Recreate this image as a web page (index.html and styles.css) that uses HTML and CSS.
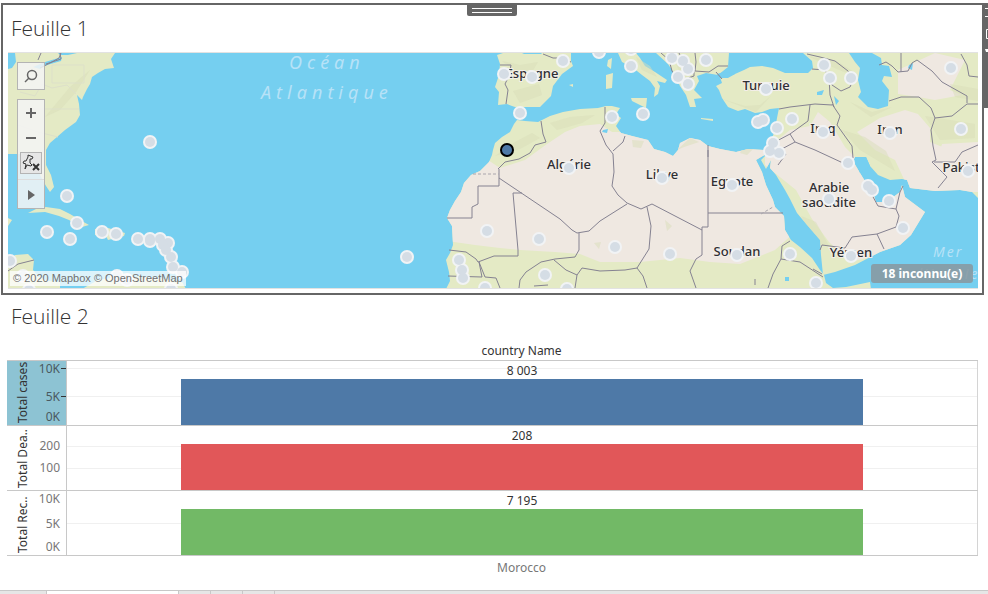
FILE: index.html
```html
<!DOCTYPE html>
<html lang="fr">
<head>
<meta charset="utf-8">
<title>Feuille 1 – Feuille 2</title>
<link rel="stylesheet" href="styles.css">
</head>
<body>
<main class="dashboard">
  <section class="sheet sheet-selected">
    <div class="grip"><i></i><i></i></div>
    <div class="side-tools">
      <svg width="4" height="105" viewBox="0 0 4 105" fill="none" stroke="#fff"><path d="M1 5.500H4M1 13.500H4M4 26.500H2.500V35.500H4"/><path d="M1 46H4V49H2Z" fill="#fff" stroke="none"/></svg>
    </div>
    <h2 class="title">Feuille 1</h2>
    <div class="map">
      <svg class="map-canvas" viewBox="8 53 970 235" preserveAspectRatio="xMidYMid slice">
        <defs>
          <clipPath id="africa-clip"><path d="M517 120L514 124 510 132 502 137 495 143 493 150 492 155 489 162 480 171 471 175 464 183 461 192 455 201 450 210 447 218 452 226 453 245 450 253 446 260 449 272 450 281 460 289H871L870 282 846 287 833 288 826 283 824 275 820 270 812 258 800 247 791 240 785 230 784 216 775 207 773 200 766 185 762 172 756 160 768 153 765 150 748 149 736 152 720 149 708 146 700 140 690 138 680 143 678 150 673 156 665 152 654 149 648 140 632 136 621 133 616 126 621 118 616 114 620 108 612 106 606 106 598 108 580 109 563 112 550 116 538 122 525 121Z"/></clipPath>
          <clipPath id="asia-clip"><path d="M768 153L771 141 775 130 777 118 779 108 770 109 762 112 755 113 745 109 738 111 728 107 722 98 719 90 716 86 722 83 720 77 728 77 735 74 744 70 750 67 762 66 773 68 785 73 808 73 813 68 812 61 803 53H978V198L972 192 960 190 935 191 910 188 907 180 902 179 890 180 878 175 870 166 866 157 855 157 853 161 860 173 868 186 874 196 876 202 884 202 892 198 900 192 902 185 905 197 917 206 925 212 911 235 900 245 880 252 855 265 835 272 823 275 821 255 820 240 807 225 797 213 790 199 785 190 776 175 770 168 771 160 766 169 761 160Z"/></clipPath>
        </defs>
        <path class="sea" d="M8 53H978V289H8Z"/>

        <g class="land">
          <path d="M8 53H115L111 59 114 68 105 69 98 73 92 77 90 84 87 89 83 97 82 100 77 95 79 104 80 115 76 122 65 130 57 137 50 143 46 150 46 165 51 175 54 187 50 192 46 186 40 175 36 158 26 154H8Z"/>
          <path d="M28 213L36 209 46 207 60 209 70 214 80 220 89 225 82 227 69 220 59 216 45 212ZM95 229L108 228 125 233 124 236 108 240 106 236 95 235Z"/>
          <path d="M8 264L15 255 28 254 34 260 33 270 38 276 48 281 60 282V289H8ZM8 218L12 220 8 226ZM82 289L98 280 125 276 160 278 182 282 186 289Z"/>
          <path d="M446 289L450 281 449 272 446 260 450 253 453 245 452 226 447 218 450 210 455 201 461 192 464 183 471 175 480 171 489 162 492 155 493 150 495 143 502 137 510 132 514 124 517 120 525 121 538 122 550 116 563 112 580 109 598 108 606 106 612 106 620 108 616 114 621 118 616 126 621 133 632 136 648 140 654 149 665 152 673 156 678 150 680 143 690 138 700 140 708 146 720 149 736 152 748 149 765 150 768 153 756 160 762 172 766 185 773 200 775 207 784 216 785 230 791 240 800 247 812 258 820 270 824 275 826 283 833 288 846 287 870 282 871 289Z"/>
          <path d="M768 153L771 141 775 130 777 118 779 108 770 109 762 112 755 113 745 109 738 111 728 107 722 98 719 90 716 86 722 83 720 77 728 77 735 74 744 70 750 67 762 66 773 68 785 73 808 73 813 68 812 61 803 53H978V198L972 192 960 190 935 191 910 188 907 180 902 179 890 180 878 175 870 166 866 157 855 157 853 161 860 173 868 186 874 196 876 202 884 202 892 198 900 192 902 185 905 197 917 206 925 212 911 235 900 245 880 252 855 265 835 272 823 275 821 255 820 240 807 225 797 213 790 199 785 190 776 175 770 168 771 160 766 169 761 160Z"/>
          <path d="M497 55L503 53H571L571 61 573 66 562 74 553 86 551 96 543 104 540 107 522 107 518 108 512 106 507 104 498 105 499 92 495 87 499 75 500 64Z"/>
          <path d="M618 53L622 62 632 67 642 75 650 81 655 88 654 97 658 94 660 86 657 81 665 83 667 80 655 72 645 66 640 58 636 53ZM631 98L647 98 646 108 632 101ZM656 53L668 64 674 73 680 86 686 95 690 107 696 107 694 99 702 98 694 90 699 81 697 76 706 73 718 75 728 67 729 53Z"/>
          <path d="M608 60L612 58 611 69 607 66ZM606 75L613 73 612 88 606 89ZM701 118L713 119 713 121 701 119ZM569 85L573 84 573 87Z"/>
        </g>

        <g clip-path="url(#africa-clip)">
          <path class="desert" d="M440 240L475 245 500 248 520 250 555 252 580 254 600 262 640 262 680 258 710 262 740 264 775 250 795 232 770 150 710 130 650 132 612 132 600 124 580 126 565 132 547 144 525 160 500 168 485 158 440 200Z"/>
          <path class="hill" d="M495 156L520 149 540 138 532 133 515 142ZM550 123L570 117 595 115 582 123 557 130ZM632 140L644 141 641 148 633 147ZM742 149L753 149 747 155 740 153ZM677 150L690 138 699 142 684 147ZM665 220L672 226 667 231ZM594 243L601 242 599 249Z"/>
        </g>
        <g clip-path="url(#asia-clip)">
          <path class="desert" d="M765 150L790 130 810 126 818 112 830 122 845 147 855 157 868 186 905 180 930 215 900 250 850 262 829 242 812 219 796 190 765 165ZM880 118L905 110 918 114 930 128 930 142 955 152 978 145V192H910L895 160 875 150 857 132ZM898 94L898 70 935 53 965 60 950 90 962 95 935 100 918 97ZM942 144L978 142V190L930 187Z"/>
          <path class="hill" d="M842 130L860 150 895 171 886 151 865 137ZM850 102L872 112 892 107 871 117ZM807 56L838 62 857 74 844 72ZM722 99L745 106 760 105 771 96 756 112ZM801 216L816 222 829 246 818 245ZM925 116L975 124 975 138 940 140ZM950 84L978 89 978 101 955 97ZM852 160L868 168 876 177 867 172Z"/>
        </g>
        <path class="hill" d="M502 61L520 65 538 62 532 72 514 70ZM513 91L539 84 542 95 520 103ZM636 57L650 66 657 77 642 70ZM672 55L685 65 695 78 684 82ZM45 117L70 87 90 70 76 92 60 110Z"/>

        <path class="sea" d="M849 53L855 62 860 68 858 80 861 92 858 97 868 107 878 109 888 106 889 90 882 81 884 76 892 77 889 66 882 65 881 58 872 53ZM8 53H15L16 62 12 68 8 69ZM33 67L45 62 62 57 61 61 47 65 40 69ZM58 53H77L68 55 60 55ZM522 53H542L541 54H524ZM717 74L724 72 735 74 728 78 720 78ZM785 277h4v4h-4ZM817 92L824 90 822 95 817 95ZM834 96L839 101 836 105ZM909 65L913 63 912 70 908 68ZM603 130L608 129 607 133 602 132ZM855 157L866 157 870 166 860 173Z"/>

        <g class="state-lines">
          <path d="M52 65H84V83H52ZM28 109H79M20 92L35 96 42 84 52 88 67 85 76 94M18 125L38 132 58 137"/>
        </g>
        <g class="borders">
          <path d="M61 53L59 58 50 63 40 68M8 271L18 264 34 260M41 53L38 60M60 53L61 59 46 64"/>
          <path d="M500 65L511 65 509 76 505 84 508 90 506 104M543 54L553 58 560 58 571 62M541 121L543 134 546 142 535 145 530 153 519 159 505 162 498 169M605 107L605 123 600 131 606 145 613 154 614 172 612 186 618 195 627 203 641 209 652 204 702 230"/>
          <path d="M499 169V186H478V204L472 207V218H447M499 178L560 219 572 230 577 233 589 231 600 221 627 204M522 193H513L518 250V256H494L478 262 476 259 466 252 449 250M579 233V250L575 257 555 259 541 262 526 272 520 280 519 288M554 260L566 270 577 275 582 268 600 271 625 270 637 268 649 249 651 226 647 207M637 268L643 276 647 288M448 276L482 277 479 262 485 277 496 278 500 288M577 275L575 288M534 286L548 285M708 150V227H702V255L696 259 690 271 696 288M708 213H783M790 241L782 246 781 259 773 274 768 288M781 259L800 262 823 277M755 279V285M813 269L822 274"/>
          <path d="M708 145V157M625 136L623 142 613 151"/>
          <path d="M779 109L790 107 815 104 832 105M810 105L808 121 790 134 773 143M790 134L795 142 815 150 843 163M795 142L778 151 786 154 778 165M832 104L840 116 837 125 852 146 853 158M843 163L854 165M872 195L878 206 896 209 900 192 903 186M896 209L899 216 896 227 877 234 884 249M877 234L852 237 845 248 822 245 820 250M807 54L820 57 835 61 848 71 854 78 850 87 841 91 832 85 829 78M812 69L825 70 829 78 830 95 834 107M889 101L901 97 919 97 931 108 935 118 952 116 967 104 978 104M879 65L886 62 892 66 898 72 908 71 912 63 917 60 932 71 942 82 967 96V103M961 54L967 65 969 76 978 77M901 53V72M935 118L931 130 933 146 936 160 932 162M934 162L955 162 962 152 978 145M932 162L947 177 938 188"/>
          <path d="M661 53L669 60 672 71 680 82M679 53L683 61 694 68 694 76 682 80M695 53L696 62 695 71 709 72 718 66 728 66M716 72L722 79"/>
        </g>
        <path class="borders dashed" d="M473 174H499M761 214L773 207"/>

        <g class="sea-names">
          <text class="ocean" x="289" y="69">Océan</text>
          <text class="ocean" x="261" y="99">Atlantique</text>
          <text class="mer" x="933" y="257">Mer</text>
          <text class="mer" x="914" y="279">d’Arabie</text>
        </g>
        <g class="country-names">
          <text x="532" y="78">Espagne</text><text x="569" y="169">Algérie</text>
          <text x="662" y="179">Libye</text><text x="732" y="186">Egypte</text>
          <text x="737" y="256">Soudan</text><text x="766" y="90">Turquie</text>
          <text x="823" y="133">Iraq</text><text x="890" y="134">Iran</text>
          <text x="829" y="192">Arabie</text><text x="829" y="207">saoudite</text>
          <text x="851" y="257">Yémen</text><text x="969" y="172">Pakistan</text>
        </g>
        <g class="marks" id="marks"></g>
        <circle class="mark-selected" cx="507" cy="150" r="6"/>
      </svg>
      <div class="map-tools">
        <button class="tool search" aria-label="Rechercher"><svg width="16" height="16" viewBox="0 0 16 16"><circle class="lens" cx="9" cy="7" r="4.500"/><path class="lens" d="M6 10L2 14"/></svg></button>
        <div class="tool-group">
          <button class="tool" aria-label="Zoom avant"><svg width="16" height="16" viewBox="0 0 16 16"><path class="thick" d="M3 8H13M8 3V13"/></svg></button>
          <button class="tool" aria-label="Zoom arrière"><svg width="16" height="16" viewBox="0 0 16 16"><path class="thick" d="M3 8H13"/></svg></button>
          <button class="tool pin" aria-label="Réinitialiser"><svg width="20" height="20" viewBox="0 0 20 20"><path class="dark" d="M7 2L12 4 11 6 9 6 9 10 11 12 10 13 6 12 4 16 5 11 2 10 3 8 5 8 7 4Z"/><path class="thick dark" d="M12 11L18 17M18 11L12 17"/></svg></button>
          <button class="tool more" aria-label="Autres outils"><svg width="16" height="16" viewBox="0 0 16 16"><path class="solid" d="M5 3L12 8 5 13Z"/></svg></button>
        </div>
      </div>
      <div class="attribution">© 2020 Mapbox © OpenStreetMap</div>
      <button class="unknown">18 inconnu(e)</button>
    </div>
  </section>

  <section class="sheet-two">
    <h2 class="title">Feuille 2</h2>
    <div class="chart">
      <div class="column-title">country Name</div>
      <div class="row">
        <div class="axis active"><span class="axis-name">Total cases</span>
          <div class="ticks"><span class="t8 dash">10K</span><span class="t36 dash">5K</span><span class="t56">0K</span></div></div>
        <div class="plot cases"><span class="value">8 003</span><div class="bar blue"></div></div>
      </div>
      <div class="row">
        <div class="axis"><span class="axis-name">Total Dea..</span>
          <div class="ticks"><span class="t20">200</span><span class="t42">100</span></div></div>
        <div class="plot deaths"><span class="value">208</span><div class="bar red"></div></div>
      </div>
      <div class="row">
        <div class="axis"><span class="axis-name">Total Rec..</span>
          <div class="ticks"><span class="t8">10K</span><span class="t33">5K</span><span class="t56">0K</span></div></div>
        <div class="plot recovered"><span class="value">7 195</span><div class="bar green"></div></div>
      </div>
      <div class="column-label">Morocco</div>
    </div>
  </section>
</main>
<footer class="tabs"><span class="tab w46"></span><span class="tab current"></span><span class="tab w32"></span><span class="tab w32"></span><span class="tab w32"></span></footer>
<script src="map.js"></script>
</body>
</html>
```
FILE: map.js
```js
// Country marks, as map coordinates.
const points = [
  [150,142],[67,196],[77,223],[47,232],[70,239],[102,232],[116,234],[138,239],
  [150,239],[150,241],[160,239],[168,243],[163,245],[166,250],[171,257],[182,272],[173,267],
  [171,289],[10,261],[23,276],[29,290],[117,276],[127,280],[407,257],
  [504,74],[532,77],[563,61],[599,52],[520,113],[612,117],[643,114],[569,168],
  [487,231],[539,239],[615,247],[670,254],[459,260],[462,270],[463,278],[485,288],
  [545,275],[567,289],[631,66],[631,49],[672,58],[683,61],[688,69],[678,77],[688,84],
  [706,60],[766,89],[758,122],[763,120],[777,128],[792,119],[773,143],[770,151],[779,153],
  [662,178],[732,185],[737,255],[790,254],[824,65],[830,78],[851,78],[951,68],[961,129],
  [823,132],[890,133],[848,163],[968,171],[829,199],[868,186],[872,190],[889,201],
  [903,228],[851,256],[816,283]
];
const layer = document.getElementById("marks");
// Halos first, so that overlapping marks merge into one shape.
for (const [radius, name] of [[7, "halo"], [5, "dot"]]) {
  for (const [x, y] of points) {
    const c = document.createElementNS("http://www.w3.org/2000/svg", "circle");
    c.setAttribute("cx", x);
    c.setAttribute("cy", y);
    c.setAttribute("r", radius);
    c.setAttribute("class", name);
    layer.appendChild(c);
  }
}
```
FILE: styles.css
```css
* { box-sizing: border-box; }
body {
  margin: 0;
  min-height: 100vh;
  display: flex;
  flex-direction: column;
  background: #fff;
  color: #333;
  font: 12px/16px "Noto Sans", "Open Sans", sans-serif;
  overflow: hidden;
}
button { font: inherit; padding: 0; border: 0; }
.dashboard { flex: 1; padding-top: 3px; }
.sheet {
  position: relative;
  margin: 0 4px 0 1px;
  padding: 0 4px 4px 5px;
}
.sheet-selected { border: 2px solid #666; }
.title {
  margin: 0;
  height: 47px;
  padding: 8px 3px;
  font: 300 21px/30px "Open Sans", "Noto Sans", sans-serif;
}
.grip {
  position: absolute;
  top: -2px;
  left: 50%;
  width: 50px;
  height: 13px;
  margin-left: -26px;
  padding: 5px;
  display: grid;
  gap: 3px;
  background: #666;
  border-radius: 0 0 2px 2px;
}
.grip i { height: 1px; background: #fff; }
.side-tools {
  position: absolute;
  top: -2px;
  right: -6px;
  width: 4px;
  height: 105px;
  background: #666;
}
.side-tools svg { display: block; }
.map {
  position: relative;
  height: 237px;
  border: 1px solid #e2e2e2;
  border-width: 1px 0;
  overflow: hidden;
}
.map-canvas { display: block; width: 100%; height: 235px; }
.sea { fill: #75cff0; }
.land { fill: #e4eac5; }
.desert { fill: #efe8e1; }
.hill { fill: #d9deb9; opacity: .5; }
.borders { fill: none; stroke: #858291; stroke-width: 1; }
.dashed { stroke-dasharray: 3 2; stroke: #aaa6ad; }
.state-lines { fill: none; stroke: #dde0c9; }
.sea-names { fill: #b7e2f7; font-style: italic; }
.ocean { font-size: 18px; letter-spacing: 5px; }
.mer { font-size: 14px; letter-spacing: 2px; }
.country-names {
  fill: #2f2f33;
  stroke: #f3eee8;
  stroke-width: 2;
  paint-order: stroke;
  font-size: 13px;
  font-weight: 500;
  text-anchor: middle;
}
.halo { fill: #f1f3f5; }
.dot { fill: #d5dde5; }
.mark-selected { fill: #4e79a7; stroke: #000; stroke-width: 2; }
.map-tools {
  position: absolute;
  top: 9px;
  left: 9px;
  display: grid;
  gap: 9px;
}
.tool {
  display: flex;
  align-items: center;
  justify-content: center;
  width: 26px;
  height: 25px;
  background: none;
}
.tool svg { fill: none; stroke: #666; stroke-width: 1; }
.tool .lens { stroke-width: 1.5; }
.tool .thick { stroke-width: 2; }
.tool .dark { stroke: #333; }
.tool .solid { fill: #666; stroke: none; }
.search, .tool-group {
  width: 28px;
  border: 1px solid #b4b4b4;
  background: rgba(245, 245, 245, .85);
}
.search { height: 28px; }
.tool-group { height: 110px; }
.pin {
  width: 22px;
  height: 22px;
  margin: 2px;
  border: 1px solid #b4b4b4;
  background: #e6e6e6;
}
.more { height: 30px; margin-top: 5px; border-top: 1px solid #ddd; }
.attribution {
  position: absolute;
  left: 2px;
  bottom: 2px;
  padding: 0 3px;
  background: rgba(255, 255, 255, .75);
  color: #707070;
  font: 11px/15px "Liberation Sans", Arial, sans-serif;
}
.unknown {
  position: absolute;
  right: 5px;
  bottom: 5px;
  width: 102px;
  height: 19px;
  border-radius: 3px;
  background: rgba(137, 151, 158, .85);
  color: #fff;
  font-weight: 700;
}
.sheet-two { padding: 0 10px 0 7px; }
.sheet-two .title { padding: 6px 4px; }
.chart { display: grid; }
.column-title, .column-label { text-align: center; margin-left: 58px; }
.column-title { height: 18px; padding-top: 1px; color: #333; }
.column-label { color: #777; padding-top: 4px; }
.row {
  display: grid;
  grid-template-columns: 60px 1fr;
  height: 65px;
  border-top: 1px solid #c8c8c8;
}
.row:nth-last-child(2) { height: 66px; border-bottom: 1px solid #c8c8c8; }
.axis {
  display: grid;
  grid-template-columns: 24px 1fr;
  border-right: 1px solid #c8c8c8;
  color: #777;
  overflow: hidden;
}
.active { background: #8dc3d3; color: #4a5960; }
.axis-name {
  writing-mode: vertical-rl;
  transform: rotate(180deg);
  justify-self: end;
  width: 16px;
  height: 64px;
  padding-top: 2px;
  line-height: 16px;
  white-space: nowrap;
  color: #333;
}
.ticks { display: grid; text-align: right; }
.ticks span { grid-area: 1 / 1; height: 16px; padding-right: 6px; }
.dash {
  background: linear-gradient(#333, #333) right 7px / 5px 1px no-repeat;
}
.t8 { margin-top: 0; }
.t20 { margin-top: 12px; }
.t33 { margin-top: 25px; }
.t36 { margin-top: 28px; }
.t42 { margin-top: 34px; }
.t56 { margin-top: 48px; }
.plot {
  display: flex;
  flex-direction: column;
  align-items: center;
  border-right: 1px solid #d4d4d4;
  background-repeat: no-repeat;
}
.cases { background-image: linear-gradient(#f0f0f0, #f0f0f0), linear-gradient(#f0f0f0, #f0f0f0); background-size: 100% 1px; background-position: 0 7px, 0 35px; }
.deaths { background-image: linear-gradient(#f0f0f0, #f0f0f0), linear-gradient(#f0f0f0, #f0f0f0); background-size: 100% 1px; background-position: 0 20px, 0 42px; }
.recovered { background-image: linear-gradient(#f0f0f0, #f0f0f0); background-size: 100% 1px; background-position: 0 32px; }
.value { height: 18px; line-height: 20px; }
.bar { flex: 1; width: 75%; }
.blue { background: #4e79a7; }
.red { background: #e15759; }
.green { background: #72b966; }
.tabs {
  display: flex;
  height: 4px;
  border-top: 1px solid #c8c8c8;
  background: #e6e6e6;
}
.tab { border-right: 1px solid #c8c8c8; }
.w46 { width: 47px; }
.w32 { width: 32px; }
.current { width: 132px; background: #fff; }
```
